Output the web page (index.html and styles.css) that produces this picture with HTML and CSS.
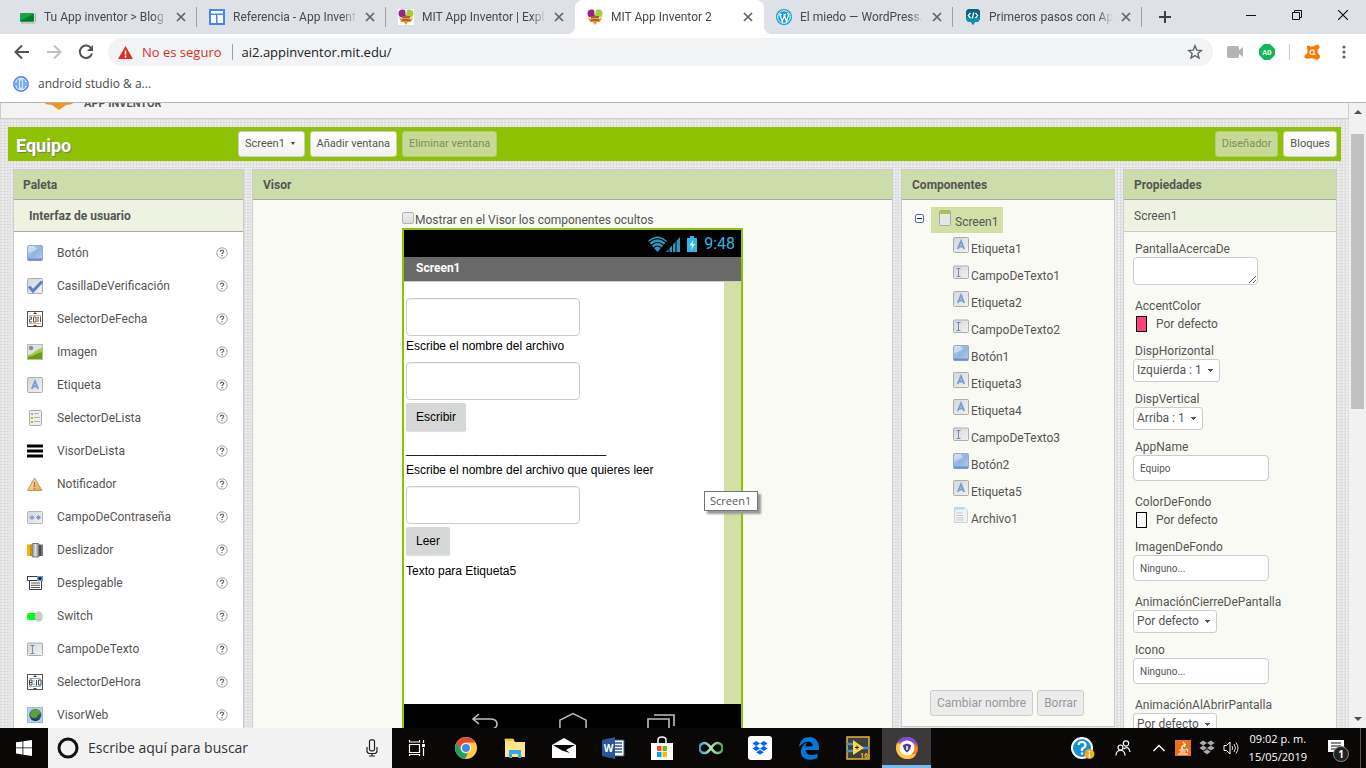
FILE: index.html
```html
<!DOCTYPE html>
<html lang="es">
<head>
<meta charset="utf-8">
<title>MIT App Inventor 2</title>
<link rel="stylesheet" href="styles.css">
</head>
<body>
<svg class="sprite" aria-hidden="true">
  <defs>
    <linearGradient id="g-blue" x1="0" y1="0" x2="1" y2="1"><stop offset="0" stop-color="#c4d8f0"/><stop offset=".5" stop-color="#93b4de"/><stop offset="1" stop-color="#b4cceb"/></linearGradient>
    <linearGradient id="g-gray" x1="0" y1="0" x2="1" y2="1"><stop offset="0" stop-color="#d4d6da"/><stop offset="1" stop-color="#f2f2f2"/></linearGradient>
    <linearGradient id="g-metal" x1="0" y1="0" x2="1" y2="0"><stop offset="0" stop-color="#888"/><stop offset=".5" stop-color="#e0e0e0"/><stop offset="1" stop-color="#777"/></linearGradient>
    <linearGradient id="g-warn" x1="0" y1="0" x2="1" y2="1"><stop offset="0" stop-color="#fff0c4"/><stop offset="1" stop-color="#f0a030"/></linearGradient>
    <linearGradient id="g-loop" x1="0" y1="0" x2="1" y2="0"><stop offset="0" stop-color="#3aa0c8"/><stop offset=".5" stop-color="#b8e6c0"/><stop offset="1" stop-color="#49a850"/></linearGradient>
  </defs>
  <symbol id="i-close" viewBox="0 0 10 10"><path d="M1 1l8 8M9 1L1 9" stroke="#5f6368" stroke-width="1.7" fill="none"/></symbol>
  <symbol id="i-bee" viewBox="0 0 16 16"><circle cx="4.500" cy="4.500" r="4" fill="#91268f"/><circle cx="11.500" cy="4.500" r="4" fill="#a6ce39"/><path d="M7 0h2L8 7z" fill="#fff"/><path d="M1 8l3 2h8l3-2-2 5h-3l-2 3-2-3H3z" fill="#f78f1e"/><path d="M4 7h8v5H4z" fill="#a8652e"/><path d="M4 9.500h8" stroke="#d7a36b"/></symbol>
  <symbol id="i-help" viewBox="0 0 12 12"><circle cx="6" cy="6" r="5.200" fill="#fff" stroke="#999" stroke-width=".9"/><path d="M4.300 4.800C4.300 2.700 7.700 2.700 7.700 4.600C7.700 5.700 6 5.700 6 7" fill="none" stroke="#666" stroke-width="1.200"/><path d="M5.400 8h1.200v1.200H5.400z" fill="#666"/></symbol>
  <symbol id="i-button" viewBox="0 0 16 16"><rect x=".5" y=".5" width="15" height="15" rx="1" fill="url(#g-blue)" stroke="#9aabc4"/><path d="M1 8C5 7 10 5 10 3h-9z" fill="#d3e1f3" opacity=".7"/><path d="M2 2h6" stroke="#eef4fb"/><path d="M1 14.500h14" stroke="#6a8fca" stroke-width="2"/></symbol>
  <symbol id="i-check" viewBox="0 0 16 16"><rect x=".5" y=".5" width="15" height="15" rx="1" fill="url(#g-gray)" stroke="#adadad"/><path d="M2 8.500l4 4.500 9-9.500" fill="none" stroke="#5b83c4" stroke-width="3"/></symbol>
  <symbol id="i-date" viewBox="0 0 16 16"><rect x=".5" y=".5" width="15" height="15" fill="#fff" stroke="#555"/><path d="M2 4.500h12M2 12.500h12" stroke="#f0b070"/><path d="M6 3l2-2 2 2zM6 14l2 2 2-2z" fill="#444"/><path d="M2 6h2.500v2.300H2.500V11H5M6.500 6v5H9V6zM11 5.500V11M13.500 5.500V11" fill="none" stroke="#555"/></symbol>
  <symbol id="i-image" viewBox="0 0 16 16"><rect x=".5" y=".5" width="15" height="15" fill="#dfe3e6" stroke="#bbb"/><path d="M1 11C7 10 9 5 15 4v11H1z" fill="#a4cc3d"/><path d="M1 13C7 12 10 9 15 8v7H1z" fill="#6b9e10"/><circle cx="4" cy="4" r="2.300" fill="#8a8f94"/></symbol>
  <symbol id="i-label" viewBox="0 0 16 16"><rect x=".5" y=".5" width="15" height="15" rx="1" fill="url(#g-gray)" stroke="#adadad"/><path d="M4.800 12L8 4.200 11.200 12M6 9.500h4" fill="none" stroke="#7a9cd0" stroke-width="1.900"/></symbol>
  <symbol id="i-list" viewBox="0 0 16 16"><rect x="2.500" y=".5" width="12" height="15" rx="1" fill="#eee" stroke="#aaa"/><path d="M7 3.500h5M7 7.500h6M7 11.500h6" stroke="#b0b0b0"/><path d="M4 3h2v2H4zM4 7h2v2H4zM4 11h2v2H4z" fill="#9cc53c"/></symbol>
  <symbol id="i-listview" viewBox="0 0 16 16"><path d="M0 3h16M0 8h16M0 13h16" stroke="#000" stroke-width="3"/></symbol>
  <symbol id="i-warn" viewBox="0 0 16 16"><path d="M7.500 2L15 14.500H.5z" fill="url(#g-warn)" stroke="#b99a70"/><path d="M7.500 6v5M7.500 12v1.500" stroke="#8c7a50" stroke-width="1.300"/></symbol>
  <symbol id="i-pass" viewBox="0 0 16 16"><rect x=".5" y="2.500" width="15" height="12" rx="1" fill="url(#g-gray)" stroke="#b5b5b5"/><path d="M5 6v5M2.500 8.500h5M3.300 6.800l3.400 3.400M6.700 6.800l-3.400 3.400M11.500 6v5M9 8.500h5M9.800 6.800l3.400 3.400M13.200 6.800l-3.400 3.400" stroke="#7396cf" stroke-width=".9"/></symbol>
  <symbol id="i-slider" viewBox="0 0 16 16"><path d="M0 2.500h6V14H0z" fill="#f3b300"/><path d="M3.500 2.500v11.500" stroke="#d88a00"/><path d="M11 2.500h5V14h-5z" fill="#777"/><path d="M12.500 3v11" stroke="#222" stroke-width="2"/><rect x="5" y="1.500" width="7" height="13.500" rx="1" fill="url(#g-metal)" stroke="#777"/></symbol>
  <symbol id="i-spinner" viewBox="0 0 16 16"><path d="M.5 1.500h15v4H.5zM2.500 5.500h12v9h-12z" fill="#fff" stroke="#333b4d"/><path d="M4 8h9M4 10.300h9M4 12.500h9" stroke="#555"/><path d="M10 1h6v5h-6z" fill="#6e92dc"/><path d="M11 2.500h4l-2 3z" fill="#000"/></symbol>
  <symbol id="i-switch" viewBox="0 0 16 16"><rect x="0" y="5" width="14" height="7" rx="2" fill="#0f1"/><ellipse cx="11.800" cy="8.500" rx="4" ry="5.200" fill="#cacaca"/></symbol>
  <symbol id="i-text" viewBox="0 0 16 16"><rect x=".5" y="2" width="15" height="12.500" rx="1" fill="url(#g-gray)" stroke="#adadad"/><path d="M3.500 4.500h4M3.500 12.500h4M5.500 4.500v8" stroke="#7489ae"/></symbol>
  <symbol id="i-time" viewBox="0 0 16 16"><rect x=".5" y=".5" width="15" height="15" fill="#fff" stroke="#555"/><path d="M2 4.500h12M2 12.500h12" stroke="#8cb4d8"/><path d="M6 3l2-2 2 2zM6 14l2 2 2-2z" fill="#444"/><path d="M2.500 6h2.500v5H2.500zM2.500 8.500H5M7 6.500v1M7 9.500v1M9.500 6v5.500M11.500 6H14v5h-2.500z" fill="none" stroke="#444"/></symbol>
  <symbol id="i-web" viewBox="0 0 16 16"><rect x=".5" y=".5" width="15" height="15" fill="#b7cdec" stroke="#9cb8de"/><circle cx="8.300" cy="8" r="6" fill="#2b4f8c"/><path d="M4 4c4-3 8-2 10 2-2 2-3 1-4 4-3 2-6 1-7-2z" fill="#5da130"/><path d="M4 11c3 2 6 2 9 0-2 4-7 4-9 0z" fill="#143d2a"/></symbol>
  <symbol id="i-screen" viewBox="0 0 16 16"><rect x="2.500" y=".5" width="11" height="15" rx="1" fill="#e6e6e6" stroke="#a8a8a8"/><path d="M3 1h10v3H3z" fill="#a9c83c"/></symbol>
  <symbol id="i-file" viewBox="0 0 16 16"><path d="M1.500.5h10l3 3v12h-13z" fill="#eef2f3" stroke="#ccd2d4"/><path d="M2 1.500h9" stroke="#b4dbe4" stroke-width="2"/><path d="M3.500 6h6M3.500 8.500h7M3.500 11h7M3.500 13h7" stroke="#c3c9cc"/></symbol>
  <symbol id="i-dropbox" viewBox="0 0 16 15"><path d="M4.200 0L8 2.500 4.200 5 .4 2.500zM11.800 0l3.800 2.500L11.800 5 8 2.500zM4.200 5L8 7.500 4.200 10 .4 7.500zM11.800 5l3.800 2.500-3.800 2.500L8 7.500zM8 8.700l3.800 2.500L8 13.700l-3.800-2.500z" fill="currentColor"/></symbol>
</svg>

<div class="tabstrip">
  <div class="tab"><svg class="ico16" viewBox="0 0 16 16"><rect x="0" y="4" width="14" height="9" rx="1" fill="#16a34a"/><path d="M0 12L14 5v7z" fill="#087a2b"/><path d="M15.500 4.500v8.500M1 14h14" stroke="#aaa"/></svg><span class="tab-title">Tu App inventor &gt; Blog</span><button class="tab-close" aria-label="Cerrar"><svg><use href="#i-close"/></svg></button></div>
  <div class="tab"><svg class="ico16" viewBox="0 0 16 16"><path d="M0 0h16v16H0z" fill="#4285f4"/><path d="M2 2h12v2.500H2zM2 6h5v8H2zM8.500 6H14v8H8.500z" fill="#fff"/></svg><span class="tab-title">Referencia - App Invent</span><button class="tab-close" aria-label="Cerrar"><svg><use href="#i-close"/></svg></button></div>
  <div class="tab plain"><svg class="ico16 whitebg"><use href="#i-bee"/></svg><span class="tab-title">MIT App Inventor | Expl</span><button class="tab-close" aria-label="Cerrar"><svg><use href="#i-close"/></svg></button></div>
  <div class="tab active"><svg class="ico16"><use href="#i-bee"/></svg><span class="tab-title">MIT App Inventor 2</span><button class="tab-close" aria-label="Cerrar"><svg><use href="#i-close"/></svg></button></div>
  <div class="tab"><svg class="ico16" viewBox="0 0 16 16"><circle cx="8" cy="8" r="8" fill="#0a9bd8"/><circle cx="8" cy="8" r="6.300" fill="none" stroke="#fff"/><path d="M3 5.500h3M3.800 5.500l2.500 7L8 7.500M7.500 5.500H10M8 5.500l2.500 7 2-6.500-1-2" stroke="#fff" stroke-width="1.300" fill="none"/></svg><span class="tab-title">El miedo — WordPress.</span><button class="tab-close" aria-label="Cerrar"><svg><use href="#i-close"/></svg></button></div>
  <div class="tab"><svg class="ico16" viewBox="0 0 16 16"><path d="M3 0h10l2 2v8l-2 3h-3l-2 3-2-3H3l-2-3V2z" fill="#0c6380"/><path d="M1 8h14v2l-2 3h-3l-2 3-2-3H3l-2-3z" fill="#0c8fa8"/><path d="M5.500 4L3.300 6.500 5.500 9M10.500 4l2.200 2.500L10.500 9M8.800 3.500l-1.600 6" stroke="#fff" stroke-width="1.300" fill="none"/></svg><span class="tab-title">Primeros pasos con App</span><button class="tab-close" aria-label="Cerrar"><svg><use href="#i-close"/></svg></button></div>
  <button class="newtab" aria-label="Nueva pestaña"><svg viewBox="0 0 12 12"><path d="M6 0v12M0 6h12" stroke="#3c4043" stroke-width="2"/></svg></button>
  <div class="wincontrols">
    <button aria-label="Minimizar"><svg viewBox="0 0 10 10"><path d="M0 5.500h10" stroke="#111"/></svg></button>
    <button aria-label="Restaurar"><svg viewBox="0 0 10 10"><path d="M.5 2.500h7v7h-7zM2.500 2.500v-2h7v7h-2" stroke="#111" fill="none"/></svg></button>
    <button aria-label="Cerrar ventana"><svg viewBox="0 0 10 10"><path d="M0 0l10 10M10 0L0 10" stroke="#111" stroke-width="1.200"/></svg></button>
  </div>
</div>

<div class="toolbar">
  <button class="navbtn" aria-label="Atrás"><svg viewBox="0 0 16 16"><path d="M15 8H2M8 1.500L1.500 8 8 14.500" fill="none" stroke="#505357" stroke-width="2"/></svg></button>
  <button class="navbtn" aria-label="Adelante"><svg viewBox="0 0 16 16"><path d="M1 8h13M8 1.500L14.500 8 8 14.500" fill="none" stroke="#bdc1c6" stroke-width="2"/></svg></button>
  <button class="navbtn" aria-label="Recargar"><svg viewBox="0 0 16 16"><path d="M13.300 4.500A6.200 6.200 0 1 0 14 9.500" fill="none" stroke="#505357" stroke-width="2"/><path d="M15 1v6H9z" fill="#505357"/></svg></button>
  <div class="omnibox">
    <svg class="warnico" viewBox="0 0 15 13"><path d="M7.500 0L15 13H0z" fill="#d93025"/><path d="M7.500 4.500v4M7.500 9.500v2" stroke="#fff" stroke-width="1.600"/></svg>
    <span class="insecure">No es seguro</span>
    <input class="url" type="text" aria-label="Dirección" value="ai2.appinventor.mit.edu/">
    <svg class="star" viewBox="0 0 16 16"><path d="M8 1.800l1.800 4.300 4.600.4-3.500 3 1.100 4.600-4-2.500-4 2.500 1.100-4.600-3.500-3 4.600-.4z" fill="none" stroke="#5f6368" stroke-width="1.400"/></svg>
  </div>
  <div class="extensions">
    <svg class="ico16" viewBox="0 0 16 16"><rect x="0" y="2" width="12" height="12" rx="2" fill="#b4b4b4"/><path d="M11 7l5-4v10l-5-4z" fill="#b4b4b4"/></svg>
    <svg class="ico16" viewBox="0 0 16 16"><path d="M5 0h6l5 5v6l-5 5H5l-5-5V5z" fill="#0fb956"/><text x="8" y="11" text-anchor="middle" class="adtext">AD</text></svg>
    <span class="extsep"></span>
    <svg class="ico16" viewBox="0 0 16 16"><path d="M4 1.500C7 3 9 3 11 1.500c2-1.500 4-1 4.500 1s-1.500 2.500-2 4 .5 3 2 4.500c1.500 2.500-1 5.500-3.500 4.500-2-1-3.500-1.500-5-1.300-2 .3-4 1-6-.2-1.500-1.500 0-3 1.500-4C4.500 8 3 5 3 3c0-1 .3-1.700 1-1.500z" fill="#ff7800"/><path d="M10 6.500C7.500 5 5.500 7 6 9s3 2 4 0V6v4.500h1.500" fill="none" stroke="#fff" stroke-width="1.200"/></svg>
    <svg class="ico16" viewBox="0 0 16 16"><circle cx="8" cy="3" r="1.600" fill="#5f6368"/><circle cx="8" cy="8" r="1.600" fill="#5f6368"/><circle cx="8" cy="13" r="1.600" fill="#5f6368"/></svg>
  </div>
</div>

<div class="bookmarks"><a href="#"><svg class="ico16" viewBox="0 0 16 16"><circle cx="8" cy="8" r="7.200" fill="#d9e7fd" stroke="#4285f4" stroke-width="1.400"/><path d="M5 3.500v9M8 4.500v7M11 3.500v9M3 6v4M13 6v4" stroke="#4285f4" stroke-width="1.200"/></svg>android studio &amp; a...</a></div>

<div class="viewport">
  <main class="page">
    <header class="site-header"><svg class="logo" viewBox="0 0 28 12"><path d="M0 6l5-5h18l5 5-7 1-7 5-7-5z" fill="#f7931e"/></svg><span>APP INVENTOR</span></header>
    <div class="projectbar">
      <h1>Equipo</h1>
      <button class="btn">Screen1 <i class="caret"></i></button>
      <button class="btn">Añadir ventana</button>
      <button class="btn off" disabled>Eliminar ventana</button>
      <button class="btn off push" disabled>Diseñador</button>
      <button class="btn">Bloques</button>
    </div>
    <div class="workspace">
      <section class="panel palette">
        <h2>Paleta</h2>
        <h3>Interfaz de usuario</h3>
        <ul>
          <li><svg><use href="#i-button"/></svg><span>Botón</span><svg class="help"><use href="#i-help"/></svg></li>
          <li><svg><use href="#i-check"/></svg><span>CasillaDeVerificación</span><svg class="help"><use href="#i-help"/></svg></li>
          <li><svg><use href="#i-date"/></svg><span>SelectorDeFecha</span><svg class="help"><use href="#i-help"/></svg></li>
          <li><svg><use href="#i-image"/></svg><span>Imagen</span><svg class="help"><use href="#i-help"/></svg></li>
          <li><svg><use href="#i-label"/></svg><span>Etiqueta</span><svg class="help"><use href="#i-help"/></svg></li>
          <li><svg><use href="#i-list"/></svg><span>SelectorDeLista</span><svg class="help"><use href="#i-help"/></svg></li>
          <li><svg><use href="#i-listview"/></svg><span>VisorDeLista</span><svg class="help"><use href="#i-help"/></svg></li>
          <li><svg><use href="#i-warn"/></svg><span>Notificador</span><svg class="help"><use href="#i-help"/></svg></li>
          <li><svg><use href="#i-pass"/></svg><span>CampoDeContraseña</span><svg class="help"><use href="#i-help"/></svg></li>
          <li><svg><use href="#i-slider"/></svg><span>Deslizador</span><svg class="help"><use href="#i-help"/></svg></li>
          <li><svg><use href="#i-spinner"/></svg><span>Desplegable</span><svg class="help"><use href="#i-help"/></svg></li>
          <li><svg><use href="#i-switch"/></svg><span>Switch</span><svg class="help"><use href="#i-help"/></svg></li>
          <li><svg><use href="#i-text"/></svg><span>CampoDeTexto</span><svg class="help"><use href="#i-help"/></svg></li>
          <li><svg><use href="#i-time"/></svg><span>SelectorDeHora</span><svg class="help"><use href="#i-help"/></svg></li>
          <li><svg><use href="#i-web"/></svg><span>VisorWeb</span><svg class="help"><use href="#i-help"/></svg></li>
        </ul>
      </section>

      <section class="panel viewer">
        <h2>Visor</h2>
        <div class="viewer-body">
          <label class="hidden-toggle"><input type="checkbox">Mostrar en el Visor los componentes ocultos</label>
          <div class="phone">
            <div class="phone-status">
              <svg class="wifi" viewBox="0 0 32 16"><path d="M0 5Q9.500-4 19 5L9.500 16z" fill="#2f97bd"/><path d="M1 6.500q8.500-7.500 17 0M3.500 9q6-5 12 0M6 11.500q3.500-3 7 0" fill="none" stroke="#000" stroke-width="1.100"/><path d="M18 16L32 1v15z" fill="#2f97bd"/><path d="M21 0v16M24.500 0v16M28 0v16" stroke="#000"/></svg>
              <svg class="battery" viewBox="0 0 10 16"><path d="M3 0h4v2h3v14H0V2h3z" fill="#33b5e5"/><path d="M6 4L2.500 9.500H5L4 14l4-6H5.500z" fill="#e8f8ff"/></svg>
              <span>9:48</span>
            </div>
            <div class="phone-title">Screen1</div>
            <div class="phone-body">
              <div class="phone-form">
                <input class="phone-input" type="text" aria-label="CampoDeTexto1">
                <p>Escribe el nombre del archivo</p>
                <input class="phone-input" type="text" aria-label="CampoDeTexto2">
                <button class="phone-btn">Escribir</button>
                <p class="rule">______________________________</p>
                <p>Escribe el nombre del archivo que quieres leer</p>
                <input class="phone-input" type="text" aria-label="CampoDeTexto3">
                <button class="phone-btn">Leer</button>
                <p class="last">Texto para Etiqueta5</p>
              </div>
              <div class="phone-scroll"></div>
            </div>
            <div class="phone-nav">
              <svg viewBox="0 0 28 22"><path d="M8 2L2 7l6 5M2 7h17q7 0 7 5t-7 5h-4" fill="none" stroke="#c0c0c0" stroke-width="1.600"/></svg>
              <svg viewBox="0 0 30 22"><path d="M1 8L15 1l14 7v12H1z" fill="none" stroke="#c0c0c0" stroke-width="1.600"/></svg>
              <svg viewBox="0 0 28 22"><path d="M1 7h21v12H1zM7 3h20v11" fill="none" stroke="#c0c0c0" stroke-width="1.600"/></svg>
            </div>
            <div class="tooltip" role="tooltip">Screen1</div>
          </div>
        </div>
      </section>

      <section class="panel components">
        <h2>Componentes</h2>
        <div class="tree">
          <div class="root"><button class="collapse" aria-label="Contraer"></button><span class="node selected"><svg><use href="#i-screen"/></svg>Screen1</span></div>
          <ul>
            <li class="node"><svg><use href="#i-label"/></svg>Etiqueta1</li>
            <li class="node"><svg><use href="#i-text"/></svg>CampoDeTexto1</li>
            <li class="node"><svg><use href="#i-label"/></svg>Etiqueta2</li>
            <li class="node"><svg><use href="#i-text"/></svg>CampoDeTexto2</li>
            <li class="node"><svg><use href="#i-button"/></svg>Botón1</li>
            <li class="node"><svg><use href="#i-label"/></svg>Etiqueta3</li>
            <li class="node"><svg><use href="#i-label"/></svg>Etiqueta4</li>
            <li class="node"><svg><use href="#i-text"/></svg>CampoDeTexto3</li>
            <li class="node"><svg><use href="#i-button"/></svg>Botón2</li>
            <li class="node"><svg><use href="#i-label"/></svg>Etiqueta5</li>
            <li class="node"><svg><use href="#i-file"/></svg>Archivo1</li>
          </ul>
        </div>
        <div class="tree-actions"><button disabled>Cambiar nombre</button><button disabled>Borrar</button></div>
      </section>

      <section class="panel properties">
        <h2>Propiedades</h2>
        <h3>Screen1</h3>
        <div class="props">
          <label for="p-about">PantallaAcercaDe</label><textarea id="p-about" class="field"></textarea>
          <span class="prop-label">AccentColor</span><button class="color"><i class="swatch pink"></i>Por defecto</button>
          <label for="p-h">DispHorizontal</label><select id="p-h"><option>Izquierda : 1</option></select>
          <label for="p-v">DispVertical</label><select id="p-v"><option>Arriba : 1</option></select>
          <label for="p-name">AppName</label><input id="p-name" class="field" type="text" value="Equipo">
          <span class="prop-label">ColorDeFondo</span><button class="color"><i class="swatch"></i>Por defecto</button>
          <label for="p-bg">ImagenDeFondo</label><input id="p-bg" class="field" type="text" value="Ninguno...">
          <label for="p-close">AnimaciónCierreDePantalla</label><select id="p-close"><option>Por defecto</option></select>
          <label for="p-icon">Icono</label><input id="p-icon" class="field" type="text" value="Ninguno...">
          <label for="p-open">AnimaciónAlAbrirPantalla</label><select id="p-open"><option>Por defecto</option></select>
        </div>
      </section>
    </div>
  </main>
  <div class="scrollbar"><i class="up"></i><div class="thumb"></div><i class="down"></i></div>
</div>

<footer class="taskbar">
  <button class="start" aria-label="Inicio"><svg viewBox="0 0 16 16"><path d="M0 2.300l6.500-.9v6.100H0zM7.300 1.300L16 0v7.500H7.300zM0 8.300h6.500v6.200L0 13.600zM7.300 8.300H16V16l-8.700-1.300z" fill="#fff"/></svg></button>
  <div class="search">
    <svg class="cortana" viewBox="0 0 22 22"><circle cx="11" cy="11" r="9" fill="none" stroke="#111" stroke-width="3"/></svg>
    <input type="text" aria-label="Buscar" placeholder="Escribe aquí para buscar">
    <svg class="mic" viewBox="0 0 12 18"><rect x="3.500" y=".8" width="5" height="11" rx="1.500" fill="none" stroke="#222" stroke-width="1.200"/><path d="M1 8v4q0 2.500 3 2.500h4q3 0 3-2.500V8M6 14.500V17M3 17h6" fill="none" stroke="#222" stroke-width="1.200"/></svg>
  </div>
  <div class="apps">
    <button aria-label="Vista de tareas"><svg class="s18" viewBox="0 0 18 18"><path d="M1.500 5.500h10v8h-10zM1.500 1v2h10V1M1.500 17v-1.500h10V17M15.500 1v3M15.500 9v8" fill="none" stroke="#fff" stroke-width="1.200"/><path d="M14 5h3v3h-3z" fill="#fff"/></svg></button>
    <button aria-label="Chrome"><svg viewBox="0 0 24 24"><circle cx="12" cy="12" r="11" fill="#ffcd40"/><path d="M2.500 6.500A11 11 0 0 1 21.500 6.500H12A5.500 5.500 0 0 0 7.200 14.700z" fill="#dd4b3e"/><path d="M2.500 6.500l4.800 8.200A5.500 5.500 0 0 0 14 17l-3 6A11 11 0 0 1 2.500 6.500z" fill="#1aa260"/><circle cx="12" cy="12" r="5" fill="#fff"/><circle cx="12" cy="12" r="4" fill="#4285f4"/></svg></button>
    <button aria-label="Explorador"><svg viewBox="0 0 24 24"><path d="M2 3h8l2 3h10v15H2z" fill="#ffe48f"/><path d="M2 3h8l1 2H2z" fill="#f4bf2d" stroke="#f6d266" stroke-width=".7"/><path d="M6 22v-8h12v8h-3v-4H9v4z" fill="#35a8e0"/></svg></button>
    <button aria-label="Correo"><svg viewBox="0 0 24 24"><path d="M0 9L12 2l12 7v13H0z" fill="#fff"/><path d="M1 9h22l-9 5 4 3-8-2.500z" fill="#080606"/></svg></button>
    <button aria-label="Word"><svg viewBox="0 0 24 24"><path d="M11 4h12v16H11z" fill="#fff" stroke="#2b579a"/><path d="M14 7h7M14 10h7M14 13h7M14 16h7" stroke="#2b579a" stroke-width="1.300"/><path d="M1 4l13-3v22L1 20z" fill="#2b579a"/><text x="7.500" y="16" text-anchor="middle" class="wordtext">W</text></svg></button>
    <button aria-label="Tienda"><svg viewBox="0 0 24 24"><path d="M1 7h22v17H1z" fill="#fff"/><path d="M8 8V4q0-3 4-3t4 3v4" fill="none" stroke="#fff" stroke-width="1.500"/><path d="M7 10h4.500v5H7z" fill="#f25022"/><path d="M12.500 10H17v5h-4.500z" fill="#7fba00"/><path d="M7 16h4.500v5H7z" fill="#00a4ef"/><path d="M12.500 16H17v5h-4.500z" fill="#ffb900"/></svg></button>
    <button aria-label="Arduino"><svg viewBox="0 0 24 24"><path d="M12 12C9 8 7 7 5.500 7a5 5 0 0 0 0 10C8 17 10 15 12 12s4-5 6.500-5a5 5 0 0 1 0 10C16 17 14 15 12 12z" fill="none" stroke="url(#g-loop)" stroke-width="2.600"/></svg></button>
    <button aria-label="Dropbox"><span class="dbx"><svg><use href="#i-dropbox"/></svg></span></button>
    <button aria-label="Edge"><svg viewBox="0 0 24 24"><path d="M2 11C3 4 7 1 12.500 1 19 1 22 6 22 12v2H8.500c.5 6 8 6 12 3.500V22C12 26 3 23 4 14.500 4.500 10 8 7.500 10.500 6.500 9 8 8.500 9.500 8.500 10.500H16C16 4 7 4 2 11z" fill="#0078d7"/></svg></button>
    <button aria-label="LabVIEW"><svg viewBox="0 0 24 24"><path d="M1 1h22v22H1z" fill="#3c4044" stroke="#e8b820" stroke-width="1.500"/><path d="M0 8h8M0 15h8M16 12h8" stroke="#3b93d0" stroke-width="2.500"/><path d="M7 4l11 8-11 7z" fill="#ffd84a"/><path d="M9 11.500h4M11 9.500v4" stroke="#222"/><text x="18" y="22" text-anchor="middle" class="lvtext">16</text></svg></button>
    <button class="current" aria-label="Avast Secure Browser"><svg viewBox="0 0 24 24"><circle cx="12" cy="12" r="11" fill="#f58220"/><path d="M2 7C7-3 23 0 23 12c-3-6-9-8-13-7z" fill="#7b4be0"/><path d="M2 7c-3 8 2 16 10 16 5 0 8-2 9-5-6 2-13-3-14-9z" fill="#ffc83d"/><circle cx="12" cy="12" r="7.500" fill="#fff"/><path d="M12 7.500l4 1.500q0 5-4 7.500-4-2.500-4-7.500z" fill="#4b3b8c"/><path d="M12 10v4" stroke="#fff" stroke-width="1.500"/></svg></button>
  </div>
  <div class="tray">
    <svg class="t24" viewBox="0 0 24 24"><circle cx="11" cy="12" r="10" fill="#1592d3" stroke="#fff" stroke-width="2"/><path d="M7.500 9Q7.500 6 11 6t3.500 3Q14.500 11 11 13v2M11 16.500v2" fill="none" stroke="#fff" stroke-width="2.200"/><circle cx="18.500" cy="18" r="5" fill="#f6a821"/><path d="M18.500 15v1.500M18.500 17.500v4" stroke="#fff" stroke-width="1.500"/></svg>
    <svg class="people" viewBox="0 0 16 16"><circle cx="5.500" cy="7.500" r="2.500" fill="none" stroke="#fff" stroke-width="1.200"/><circle cx="11" cy="3.500" r="2.700" fill="none" stroke="#fff" stroke-width="1.200"/><path d="M1 15.500q0-5 4.500-5t4.500 5M8.500 9q5-4 6.500 3" fill="none" stroke="#fff" stroke-width="1.200"/></svg>
    <svg class="t12" viewBox="0 0 12 12"><path d="M.5 9L6 3.500 11.500 9" fill="none" stroke="#fff" stroke-width="1.400"/></svg>
    <svg class="ico16" viewBox="0 0 16 16"><rect width="16" height="16" fill="#e8711c"/><path d="M8 2q3 2 0 4t0 3M11 4q-2 1-1.500 3M4 10h7M5 12h5M3 14h10M11 9q3 0 1 3" fill="none" stroke="#fff" stroke-width="1.100"/></svg>
    <svg class="ico16 gray"><use href="#i-dropbox"/></svg>
    <svg class="ico16" viewBox="0 0 16 16"><path d="M1 5.500h2.500L7 2v12l-3.500-3.500H1z" fill="none" stroke="#fff"/><path d="M9 6q1.500 2 0 4M11 4q3 4 0 8M13 2.500q4 5.500 0 11" fill="none" stroke="#ddd"/></svg>
    <div class="clock"><span>09:02 p. m.</span><span>15/05/2019</span></div>
    <div class="notify"><svg viewBox="0 0 18 18"><path d="M1 1h16v12h-6l-4 4v-4H1z" fill="#fff"/><path d="M4 4h10M4 7h10M4 10h7" stroke="#111"/></svg><b>1</b></div>
  </div>
</footer>
</body>
</html>
```
FILE: styles.css
```css
* { box-sizing: border-box; }
body {
  margin: 0;
  height: 100vh;
  display: flex;
  flex-direction: column;
  overflow: hidden;
  font-family: Roboto, "Liberation Sans", sans-serif;
  font-size: 12px;
  line-height: 16px;
  color: #555;
  background: #fff;
}
button, input, select, textarea { font: inherit; color: inherit; margin: 0; }
button { border: 0; padding: 0; background: none; }
h1, h2, h3, p, ul { margin: 0; padding: 0; }
ul { list-style: none; }
svg { display: block; flex: none; }
.sprite { position: absolute; width: 0; height: 0; }
.ico16 { width: 16px; height: 16px; }

/* Browser chrome */
.toolbar, .bookmarks, .taskbar { font-family: "Open Sans", "Noto Sans", sans-serif; }
.tabstrip { display: flex; height: 34px; padding-left: 8px; background: #dee1e6; color: #45494d; }
.tab {
  flex: 0 1 189px;
  min-width: 0;
  display: flex;
  align-items: center;
  gap: 8px;
  padding: 0 11px 0 12px;
  background: linear-gradient(#9da1a6, #9da1a6) right center / 1px 20px no-repeat;
}
.tab.plain { background: none; }
.tab.active { position: relative; background: #fff; border-radius: 8px 8px 0 0; }
.tab.active::before, .tab.active::after { content: ""; position: absolute; bottom: 0; width: 8px; height: 8px; }
.tab.active::before { right: 100%; background: radial-gradient(circle at 0 0, transparent 8px, #fff 8px); }
.tab.active::after { left: 100%; background: radial-gradient(circle at 100% 0, transparent 8px, #fff 8px); }
.tab-title {
  flex: 1;
  overflow: hidden;
  white-space: nowrap;
  -webkit-mask-image: linear-gradient(to right, #000 88%, transparent);
  mask-image: linear-gradient(to right, #000 88%, transparent);
}
.tab-close svg { width: 10px; height: 10px; }
.whitebg { background: #fff; }
.newtab { width: 46px; display: grid; place-items: center; }
.newtab svg { width: 12px; height: 12px; }
.wincontrols { margin-left: auto; display: flex; padding-bottom: 5px; }
.wincontrols button { width: 46px; display: grid; place-items: center; }
.wincontrols svg { width: 10px; height: 10px; }

.toolbar { display: flex; align-items: center; height: 36px; padding: 0 14px 0 6px; }
.navbtn { width: 32px; display: grid; place-items: center; }
.navbtn svg { width: 16px; height: 16px; }
.omnibox {
  flex: 1;
  display: flex;
  align-items: center;
  height: 28px;
  margin-left: 6px;
  padding: 0 10px;
  border-radius: 14px;
  background: #f1f3f4;
  font-size: 13px;
  color: #202124;
}
.warnico { width: 15px; height: 13px; margin-right: 9px; }
.insecure { color: #d93025; padding-right: 10px; border-right: 1px solid #9aa0a6; }
.url { flex: 1; min-width: 0; border: 0; padding: 0 9px; background: none; font-size: 13px; }
.star { width: 16px; height: 16px; }
.extensions { display: flex; align-items: center; gap: 16px; padding-left: 14px; }
.extsep { width: 1px; height: 16px; margin: 0 -2px; background: #ccc; }
.adtext { font: bold 7px Roboto, sans-serif; fill: #fff; }
.bookmarks { height: 33px; padding: 6px 13px; border-bottom: 1px solid #b6b4b6; }
.bookmarks a { display: flex; align-items: center; gap: 9px; color: #45494d; text-decoration: none; }

/* Page */
.viewport { flex: 1; min-height: 0; display: flex; }
.page {
  flex: 1;
  min-width: 0;
  display: flex;
  flex-direction: column;
  overflow: hidden;
  background-color: #ebebeb;
  background-image: radial-gradient(#d4d4d4 20%, transparent 60%), linear-gradient(90deg, #e6e6e6 50%, #eee 50%);
  background-size: 3px 3px, 4px 4px;
}
.site-header {
  flex: none;
  display: flex;
  align-items: flex-end;
  gap: 11px;
  height: 16px;
  padding: 0 44px 8px;
  overflow: hidden;
  border: 1px solid #ccc;
  border-top: 0;
  background: #f3f3f3;
  font-size: 11px;
  font-weight: 700;
  line-height: 12px;
}
.logo { width: 28px; height: 12px; }
.projectbar {
  flex: none;
  display: flex;
  gap: 5px;
  margin: 8px 8px;
  padding: 4px 4px 4px 8px;
  background: #8fc202;
}
.projectbar h1 { width: 217px; font-size: 18px; line-height: 26px; padding-top: 2px; margin-bottom: -2px; color: #fff; text-shadow: 1px 1px 1px #777; }
.btn {
  height: 26px;
  padding: 0 6px;
  border: 1px solid #ccc;
  border-radius: 3px;
  background: linear-gradient(#fff, #f2f2f2);
  font-size: 11px;
  white-space: nowrap;
}
.btn.off { background: #c6d996; border-color: #b3ca80; color: #7e9150; }
.push { margin-left: auto; }
.caret { display: inline-block; margin: 0 3px 2px; border: 2px solid transparent; border-top: 3px solid #444; border-bottom: 0; }
.workspace { flex: 1; min-height: 0; display: flex; gap: 8px; padding: 0 12px 0 13px; }
.panel { display: flex; flex-direction: column; border: 1px solid #ccc; border-bottom: 0; background: #f9faf4; }
.panel h2 { flex: none; padding: 7px 10px 6px; border-bottom: 1px solid #aaa; background: #ccdcaa; font-size: 12px; }
.panel h3 { flex: none; padding: 8px 10px 7px; border-bottom: 1px solid #ccc; background: #edf2e1; font-size: 12px; font-weight: 400; }

.palette { flex: 0 0 231px; overflow: hidden; background: #fff; }
.palette h2 { padding-left: 9px; }
.palette h3 { padding-left: 15px; font-weight: 700; border-bottom-color: #aaa; }
.palette ul { padding-top: 4px; }
.palette li { display: flex; align-items: center; gap: 14px; height: 33px; padding: 0 15px 0 13px; }
.palette li span { flex: 1; }
.palette li svg { width: 16px; height: 16px; }
.palette li .help { width: 12px; height: 12px; }

.viewer { flex: 1; min-width: 0; }
.viewer-body { flex: 1; min-height: 0; display: flex; flex-direction: column; align-self: center; width: 341px; padding-top: 12px; }
.hidden-toggle { display: flex; gap: 1px; white-space: nowrap; }
.hidden-toggle input { appearance: none; width: 12px; height: 12px; border: 1px solid #b4b4b4; border-radius: 2px; background: linear-gradient(#eee, #dcdcdc); }
.phone { position: relative; display: flex; flex-direction: column; border: 2px solid #8fc202; border-bottom: 0; font-family: "Liberation Sans", Arial, sans-serif; color: #000; }
.phone-status { display: flex; align-items: center; justify-content: flex-end; gap: 7px; height: 27px; padding-right: 6px; background: #000; color: #33b5e5; font: 16px/27px Roboto, sans-serif; }
.wifi { width: 32px; height: 16px; }
.battery { width: 10px; height: 16px; }
.phone-title { height: 25px; padding: 3px 12px; border-bottom: 1px solid #ccc; background: #696969; color: #fff; font-family: Roboto, sans-serif; font-weight: 700; }
.phone-body { display: flex; height: 422px; background: #fff; }
.phone-form { flex: 1; display: flex; flex-direction: column; align-items: flex-start; padding: 16px 2px; }
.phone-scroll { width: 17px; background: #d2e0a6; }
.phone-input { width: 174px; height: 38px; border: 1px solid #ccc; border-radius: 4px; background: #fff; box-shadow: inset 0 1px 1px #eee; }
.phone-form p { padding: 2px 0 8px; }
.phone-btn { margin-top: 3px; height: 28px; padding: 0 10px; border-radius: 2px; background: #d6d8d7; box-shadow: 0 1px 1px #ddd; }
.phone-form .rule { padding: 10px 0 3px; }
.phone-form .last { padding-top: 8px; }
.phone-nav { display: flex; justify-content: center; gap: 60px; height: 48px; padding-top: 8px; background: #000; }
.phone-nav svg { width: 28px; height: 22px; }
.tooltip { position: absolute; left: 300px; top: 261px; width: 54px; padding: 1px 5px; border: 1px solid #767676; background: #fff; box-shadow: 3px 3px 2px #999; color: #575757; font-family: "Open Sans", sans-serif; font-size: 11px; line-height: 16px; }

.components { flex: 0 0 214px; margin-bottom: 1px; border-bottom: 1px solid #ccc; }
.tree { flex: 1; padding: 7px 13px; }
.root { display: flex; gap: 7px; }
.collapse { width: 9px; height: 9px; margin-top: 7px; border: 1px solid #5a6cb4; border-radius: 2px; background: linear-gradient(#11218f, #11218f) center / 5px 1px no-repeat #fff; }
.node { display: flex; gap: 2px; height: 27px; line-height: 30px; }
.node svg { width: 16px; height: 16px; margin-top: 3px; }
.selected { height: 26px; padding: 0 5px 0 6px; gap: 2px; background: #d2e0a6; }
.tree ul { padding: 1px 0 0 38px; }
.tree-actions { display: flex; gap: 4px; padding: 0 28px 10px; }
.tree-actions button { height: 26px; padding: 0 6px; border: 1px solid #ccc; border-radius: 3px; background: #ececec; color: #999; white-space: nowrap; }

.properties { flex: 0 0 214px; }
.props { display: flex; flex-direction: column; align-items: flex-start; min-height: 0; padding: 9px; overflow: hidden; }
.props label, .prop-label { flex: none; padding-left: 2px; }
.field { flex: none; width: 136px; height: 26px; margin-bottom: 13px; padding: 0 6px; border: 1px solid #ccc; border-radius: 4px; background: #fff; font-size: 10px; }
textarea.field { width: 125px; height: 28px; }
.props select { flex: none; appearance: none; height: 23px; margin-bottom: 9px; padding: 0 17px 2px 3px; border: 1px solid #ccc; border-radius: 3px; color: #555;
  background:
    linear-gradient(#555, #555) right 6px top 9px / 5px 1px no-repeat,
    linear-gradient(#555, #555) right 7px top 10px / 3px 1px no-repeat,
    linear-gradient(#555, #555) right 8px top 11px / 1px 1px no-repeat,
    #fff; }
.color { flex: none; display: flex; align-items: center; gap: 9px; height: 20px; margin-bottom: 9px; padding-left: 3px; }
.swatch { width: 11px; height: 16px; border: 1px solid #000; background: #fff; }
.pink { background: #ff4081; }

.scrollbar { width: 17px; display: flex; flex-direction: column; align-items: center; padding: 7px 0; background: #f1f1f1; }
.scrollbar i { border: 4px solid transparent; }
.scrollbar .up { border-top: 0; border-bottom-color: #505050; }
.scrollbar .down { border-bottom: 0; border-top-color: #505050; margin-top: auto; }
.thumb { width: 13px; flex: 0 0 45%; margin-top: 20px; background: #c1c1c1; }

/* Taskbar */
.taskbar { flex: none; display: flex; height: 40px; background: #0a0707; color: #fff; }
.start { width: 48px; display: grid; place-items: center; }
.start svg { width: 16px; height: 16px; }
.search { display: flex; align-items: center; flex: 0 1 344px; min-width: 0; padding: 0 14px 0 9px; background: #f2f2f2; color: #333; }
.cortana { width: 22px; height: 22px; margin-right: 9px; }
.search input { flex: 1; min-width: 0; border: 0; padding: 0; background: none; font-size: 14px; }
.search input::placeholder { color: #333; opacity: 1; }
.mic { width: 12px; height: 18px; }
.apps { display: flex; }
.apps button { width: 49px; display: grid; place-items: center; }
.apps svg { width: 24px; height: 24px; }
.apps .s18 { width: 18px; height: 18px; }
.apps .current { background: #3b3939; box-shadow: inset 0 -3px #76b9ed; }
.apps .dbx { display: grid; place-items: center; width: 24px; height: 24px; border-radius: 3px; background: #fff; color: #0061ff; }
.apps .dbx svg { width: 16px; height: 15px; }
.wordtext { font: bold 10px "Open Sans", sans-serif; fill: #fff; }
.lvtext { font: bold 7px Roboto, sans-serif; fill: #f0c020; }
.tray { display: flex; align-items: center; gap: 8px; margin-left: auto; margin-right: 5px; padding-right: 12px; border-right: 1px solid #555; }
.t24 { width: 24px; height: 24px; margin-right: 12px; }
.people { width: 16px; height: 16px; margin-right: 14px; }
.t12 { width: 12px; height: 12px; margin-right: 2px; }
.gray { color: #aaa; }
.clock { display: flex; flex-direction: column; align-items: center; font-size: 11px; line-height: 18px; margin: 0 3px 0 2px; white-space: nowrap; }
.notify { position: relative; width: 30px; padding-left: 9px; }
.notify svg { width: 18px; height: 18px; }
.notify b { position: absolute; left: 15px; top: 7px; width: 16px; height: 16px; border: 1px solid #888; border-radius: 8px; background: #222; font-size: 10px; line-height: 14px; text-align: center; }
```
